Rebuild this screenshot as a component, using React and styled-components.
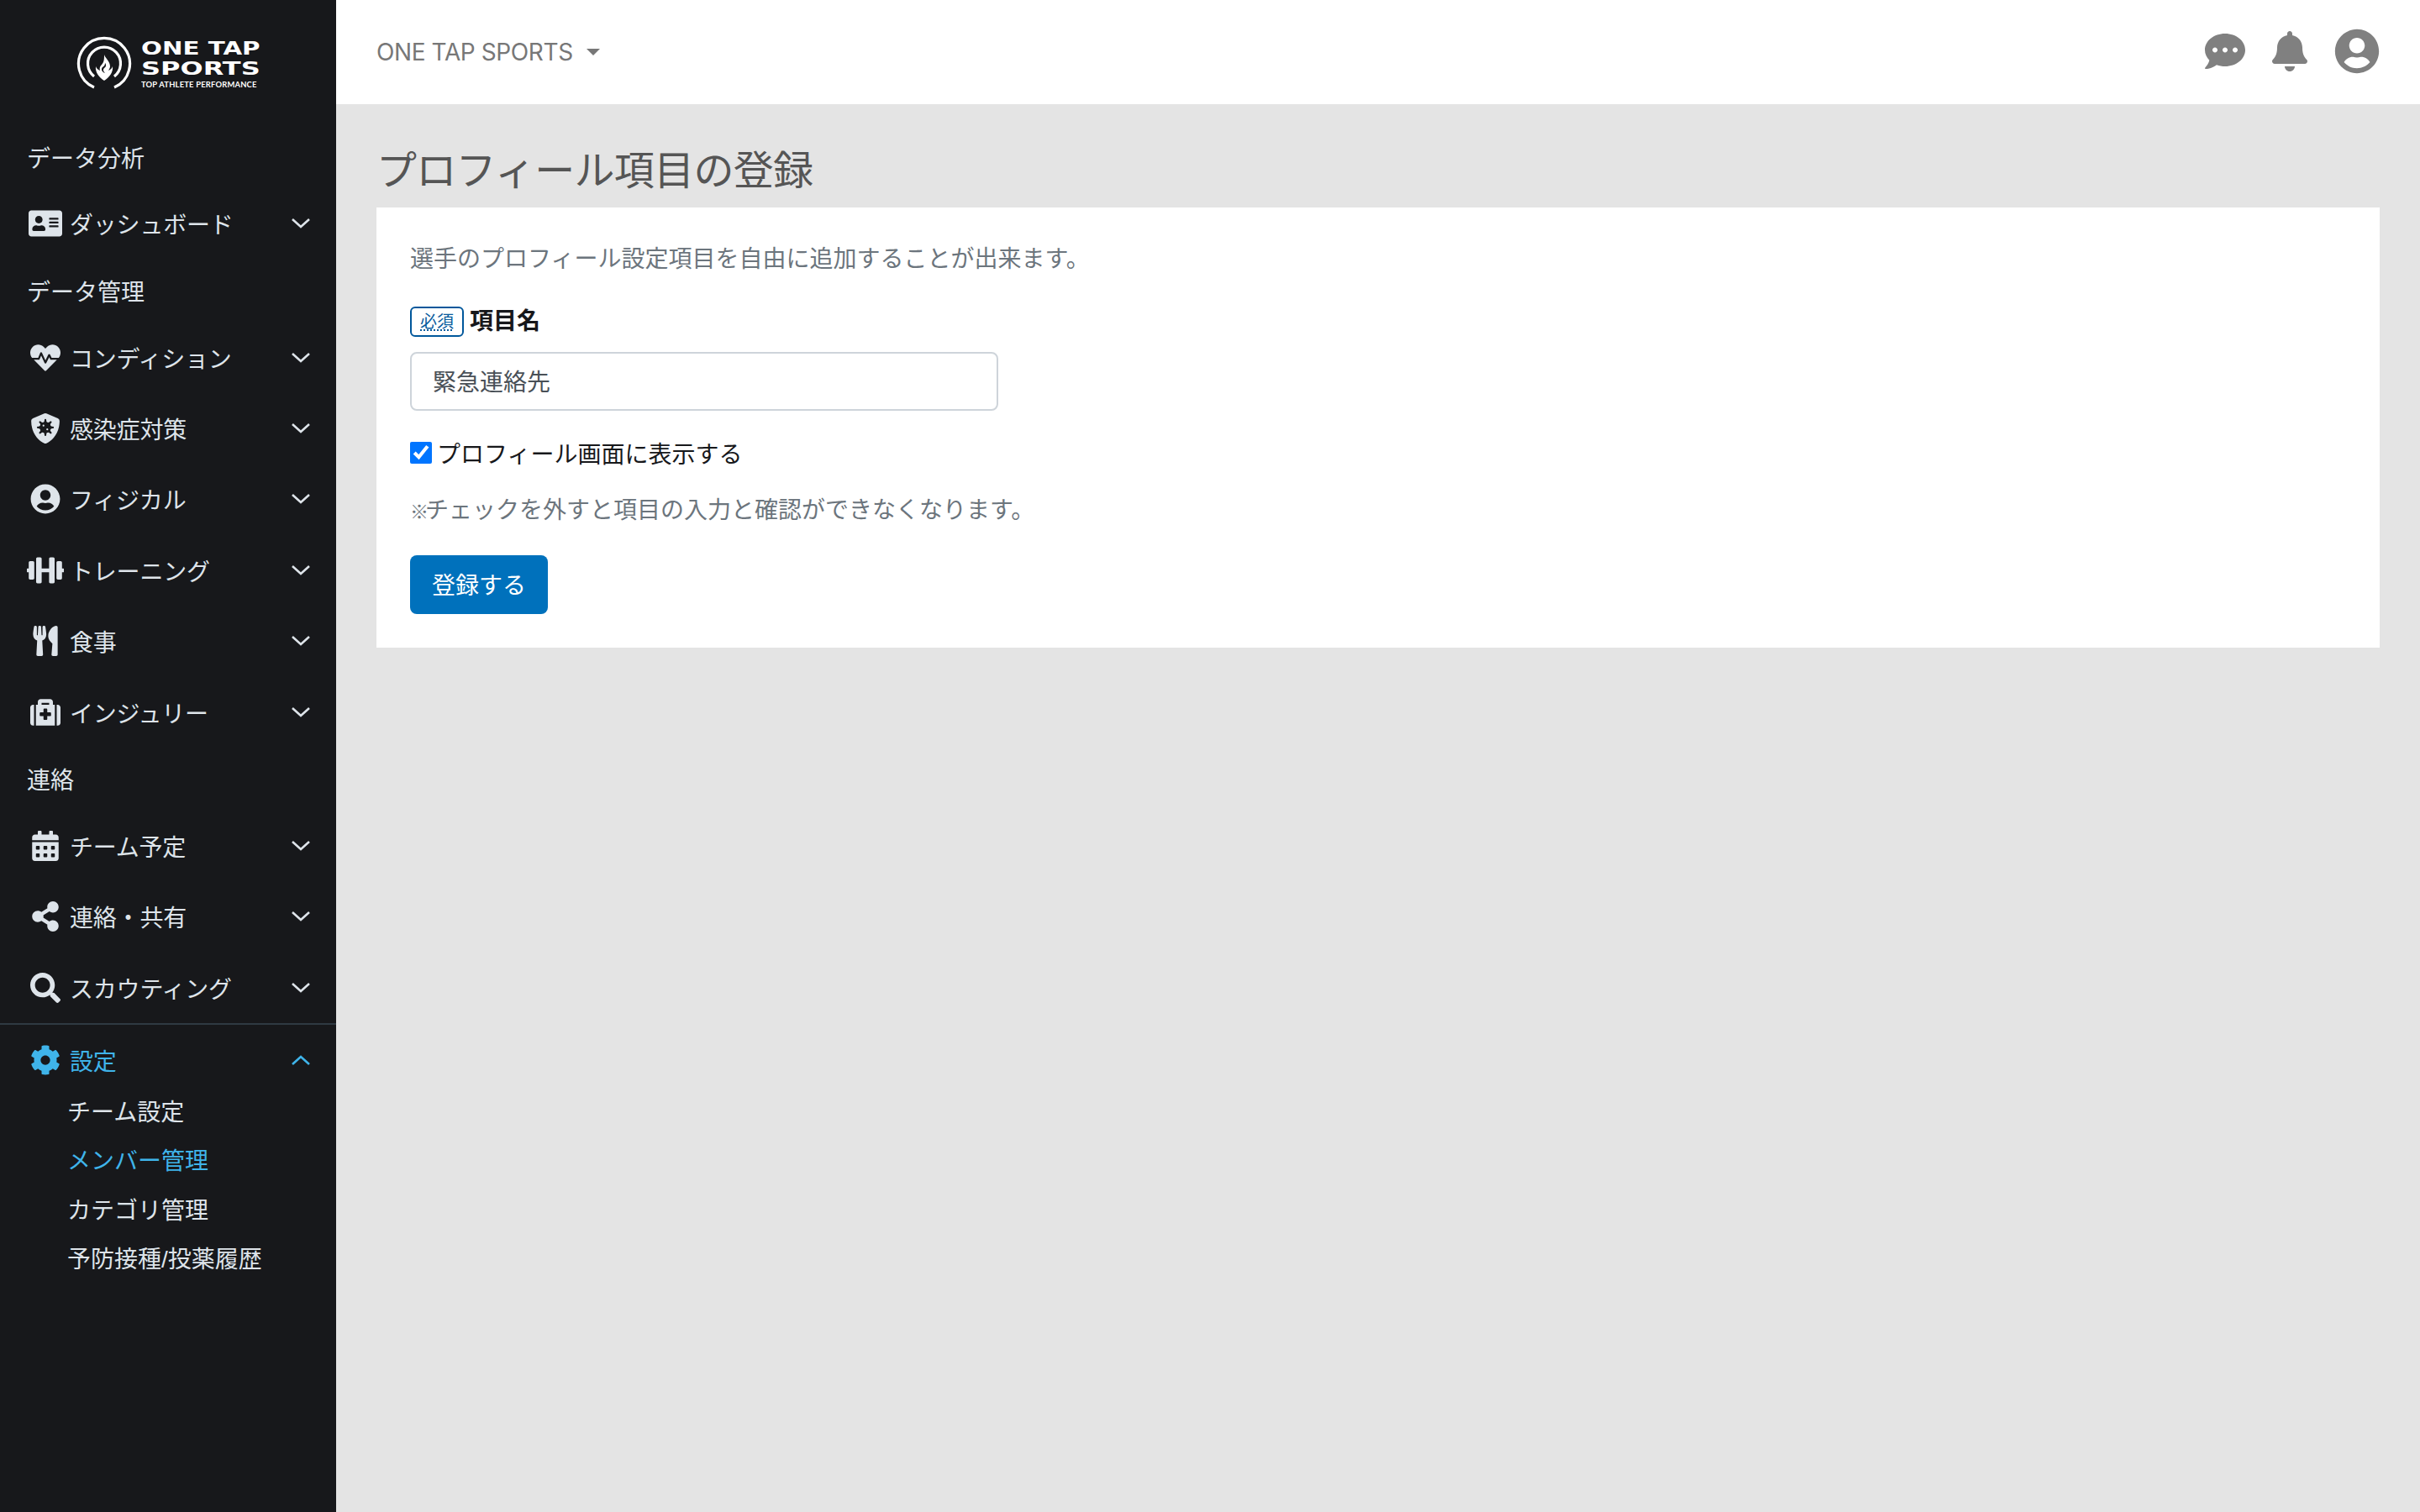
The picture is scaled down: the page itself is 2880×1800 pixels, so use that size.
import React from "react";
import styled, { createGlobalStyle } from "styled-components";
import {
  FaAddressCard,
  FaHeartbeat,
  FaShieldVirus,
  FaUserCircle,
  FaDumbbell,
  FaUtensils,
  FaMedkit,
  FaCalendarAlt,
  FaShareAlt,
  FaSearch,
  FaCog,
  FaCommentDots,
  FaBell,
} from "react-icons/fa";

const GlobalStyle = createGlobalStyle`
  html, body {
    margin: 0;
    padding: 0;
    background: #e4e4e4;
    font-family: "Liberation Sans", "Noto Sans CJK JP", sans-serif;
  }
  * { box-sizing: border-box; }
`;

const MENU_TOP = [
  { label: "データ分析" },
  { label: "ダッシュボード", icon: FaAddressCard, size: 40 },
  { label: "データ管理" },
  { label: "コンディション", icon: FaHeartbeat, size: 36 },
  { label: "感染症対策", icon: FaShieldVirus, size: 36 },
  { label: "フィジカル", icon: FaUserCircle, size: 36 },
  { label: "トレーニング", icon: FaDumbbell, size: 44 },
  { label: "食事", icon: FaUtensils, size: 36 },
  { label: "インジュリー", icon: FaMedkit, size: 36 },
  { label: "連絡" },
  { label: "チーム予定", icon: FaCalendarAlt, size: 36 },
  { label: "連絡・共有", icon: FaShareAlt, size: 36 },
  { label: "スカウティング", icon: FaSearch, size: 36 },
];

const SUB_MENU = [
  { label: "チーム設定" },
  { label: "メンバー管理", active: true },
  { label: "カテゴリ管理" },
  { label: "予防接種/投薬履歴" },
];

function Chevron({ up }) {
  return (
    <ChevronSvg viewBox="0 0 24 14">
      <polyline points={up ? "2,12 12,3 22,12" : "2,2 12,11 22,2"} />
    </ChevronSvg>
  );
}

function LogoMark() {
  return (
    <svg width="66" height="66" viewBox="0 0 66 66">
      <g fill="none" stroke="#fff" strokeWidth="3.2">
        <path d="M21 62 A30.5 30.5 0 1 1 45 62" />
        <path d="M21 49 A19.5 19.5 0 1 1 45 49" />
      </g>
      <path
        fill="#fff"
        d="M33 23c1 4 7 8 7 14 0 2-1 3-2 5 2-1 4-2 5-5 1 7-4 13-10 17-6-4-11-10-10-17 1 3 3 4 5 5-1-3 0-5 2-7 3-3 3-7 3-12z"
      />
      <path fill="#17181b" d="M34 33c2 2 1 5-1 6-2 2-1 4 1 6-4-1-5-5-3-7 2-1 3-3 3-5z" />
    </svg>
  );
}

export default function App() {
  return (
    <Page>
      <GlobalStyle />
      <Sidebar>
        <Logo>
          <LogoMark />
          <LogoText>
            <LogoLine $scale={1.43}>ONE TAP</LogoLine>
            <LogoLine $scale={1.56}>SPORTS</LogoLine>
            <LogoTagline>TOP ATHLETE PERFORMANCE</LogoTagline>
          </LogoText>
        </Logo>
        <Nav>
          {MENU_TOP.map((item) =>
            item.icon ? (
              <NavRow key={item.label}>
                <IconBox>
                  <item.icon size={item.size} />
                </IconBox>
                <NavLabel>{item.label}</NavLabel>
                <Chevron />
              </NavRow>
            ) : (
              <PlainRow key={item.label}>{item.label}</PlainRow>
            )
          )}
        </Nav>
        <Divider />
        <NavRow $active>
          <IconBox>
            <FaCog size={36} />
          </IconBox>
          <NavLabel>設定</NavLabel>
          <Chevron up />
        </NavRow>
        <SubMenu>
          {SUB_MENU.map((item) => (
            <SubRow key={item.label} $active={item.active}>
              {item.label}
            </SubRow>
          ))}
        </SubMenu>
      </Sidebar>
      <Main>
        <Header>
          <TeamMenu>ONE TAP SPORTS</TeamMenu>
          <HeaderIcons>
            <FaCommentDots size={48} />
            <FaBell size={48} />
            <FaUserCircle size={54} />
          </HeaderIcons>
        </Header>
        <Content>
          <Title>プロフィール項目の登録</Title>
          <Card>
            <Description>選手のプロフィール設定項目を自由に追加することが出来ます。</Description>
            <LabelRow>
              <RequiredBadge>
                <abbr>必須</abbr>
              </RequiredBadge>
              <FieldLabel>項目名</FieldLabel>
            </LabelRow>
            <TextInput defaultValue="緊急連絡先" />
            <CheckRow>
              <CheckBox type="checkbox" defaultChecked />
              プロフィール画面に表示する
            </CheckRow>
            <Note>
              <NoteMark>※</NoteMark>チェックを外すと項目の入力と確認ができなくなります。
            </Note>
            <SubmitButton>登録する</SubmitButton>
          </Card>
        </Content>
      </Main>
    </Page>
  );
}

const Page = styled.div`
  display: flex;
  min-height: 100vh;
`;

const Sidebar = styled.aside`
  width: 400px;
  flex-shrink: 0;
  background: #17181b;
  color: #dee4ea;
  font-size: 28px;
`;

const Logo = styled.div`
  height: 149px;
  padding: 42px 0 0 91px;
  display: flex;
  align-items: flex-start;
  gap: 11px;
`;

const LogoText = styled.div`
  width: 142px;
  padding-top: 4px;
  color: #fff;
  overflow: hidden;
`;

const LogoLine = styled.div`
  font-family: "DejaVu Sans", sans-serif;
  font-weight: 700;
  font-size: 20.5px;
  line-height: 24px;
  white-space: nowrap;
  transform: scaleX(${(p) => p.$scale});
  transform-origin: left center;
`;

const LogoTagline = styled.div`
  font-family: "Lato", sans-serif;
  font-weight: 700;
  font-size: 9.4px;
  line-height: 12px;
  margin-top: 1px;
  white-space: nowrap;
  letter-spacing: 0.2px;
`;

const Nav = styled.nav`
  display: flex;
  flex-direction: column;
`;

const NavRow = styled.div`
  height: 84.4px;
  display: flex;
  align-items: center;
  padding: 0 30px 0 32px;
  color: ${(p) => (p.$active ? "#3fb4ea" : "#dee4ea")};
`;

const PlainRow = styled.div`
  height: 75px;
  display: flex;
  align-items: center;
  padding-left: 32px;
`;

const IconBox = styled.span`
  width: 44px;
  margin-right: 7px;
  display: flex;
  justify-content: center;
  align-items: center;
`;

const NavLabel = styled.span`
  flex: 1;
  letter-spacing: -0.2px;
`;

const ChevronSvg = styled.svg`
  width: 24px;
  height: 14px;
  fill: none;
  stroke: currentColor;
  stroke-width: 2.6;
`;

const Divider = styled.div`
  height: 2px;
  background: #2f3a42;
`;

const SubMenu = styled.div`
  display: flex;
  flex-direction: column;
  padding-left: 80px;
  margin-top: -12px;
`;

const SubRow = styled.div`
  height: 58.6px;
  display: flex;
  align-items: center;
  color: ${(p) => (p.$active ? "#3fb4ea" : "#dee4ea")};
`;

const Main = styled.main`
  flex: 1;
  min-width: 0;
  display: flex;
  flex-direction: column;
`;

const Header = styled.header`
  height: 124px;
  background: #fff;
  display: flex;
  align-items: center;
  justify-content: space-between;
  padding: 0 48px;
`;

const TeamMenu = styled.div`
  font-family: "Inter", "Noto Sans CJK JP", sans-serif;
  font-size: 28px;
  letter-spacing: -0.4px;
  color: #777;
  display: flex;
  align-items: center;

  &::after {
    content: "";
    margin-left: 16px;
    border-top: 8px solid #777;
    border-left: 8px solid transparent;
    border-right: 8px solid transparent;
  }
`;

const HeaderIcons = styled.div`
  display: flex;
  align-items: center;
  gap: 29px;
  color: #808080;
  margin-top: -2px;
`;

const Content = styled.div`
  padding: 0 48px;
`;

const Title = styled.h1`
  margin: 0;
  height: 123px;
  padding-top: 50px;
  font-size: 48px;
  font-weight: 400;
  line-height: 60px;
  letter-spacing: -0.7px;
  color: #555;
`;

const Card = styled.section`
  background: #fff;
  height: 524px;
  padding: 42px 40px 40px;
`;

const Description = styled.p`
  margin: 0;
  font-size: 28px;
  line-height: 40px;
  color: #6c757d;
`;

const LabelRow = styled.div`
  display: flex;
  align-items: center;
  gap: 7px;
  margin-top: 30px;
  height: 42px;
`;

const RequiredBadge = styled.span`
  width: 64px;
  height: 36px;
  margin-top: 6px;
  border: 2px solid #00579b;
  border-radius: 6px;
  color: #0a5c9e;
  font-size: 20px;
  display: flex;
  align-items: center;
  justify-content: center;

  abbr {
    text-decoration: underline dotted;
    text-underline-offset: 2px;
    line-height: 26px;
  }
`;

const FieldLabel = styled.label`
  font-size: 28px;
  font-weight: 700;
  color: #17181b;
`;

const TextInput = styled.input`
  display: block;
  width: 700px;
  height: 70px;
  margin-top: 18px;
  padding: 0 25px 3px;
  border: 2px solid #ced4da;
  border-radius: 8px;
  font-family: inherit;
  font-size: 28px;
  color: #495057;
  outline: none;
`;

const CheckRow = styled.label`
  display: flex;
  align-items: center;
  gap: 6px;
  margin-top: 30px;
  height: 40px;
  font-size: 28px;
  color: #17181b;
`;

const CheckBox = styled.input`
  width: 26px;
  height: 26px;
  margin: 0;
`;

const Note = styled.p`
  margin: 29px 0 0;
  font-size: 28px;
  line-height: 40px;
  color: #6c757d;
`;

const NoteMark = styled.span`
  font-size: 22px;
  font-weight: 700;
  letter-spacing: -4px;
`;

const SubmitButton = styled.button`
  display: block;
  width: 164px;
  height: 70px;
  margin-top: 31px;
  padding: 0 0 3px;
  border: none;
  border-radius: 8px;
  background: #0071bc;
  color: #fff;
  font-family: inherit;
  font-size: 28px;
`;
